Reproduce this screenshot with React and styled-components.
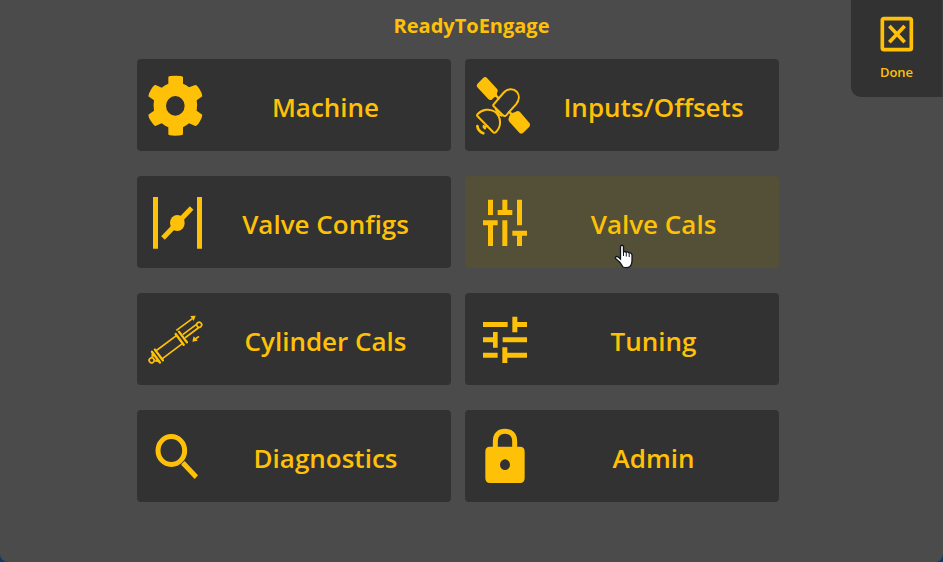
import React from 'react';
import styled, { createGlobalStyle } from 'styled-components';

const AMBER = '#ffc107';

const GlobalStyle = createGlobalStyle`
  * {
    box-sizing: border-box;
  }

  body {
    margin: 0;
    background: #0a3a66;
    font-family: "Open Sans", "Noto Sans", sans-serif;
  }
`

const Page = styled.div`
  display: grid;
  grid-template-columns: 137px 1fr 164px;
  grid-template-rows: 59px auto 1fr;
  min-height: 100vh;
  background: #4b4b4b;
  border-radius: 0 0 8px 8px;
`

const Title = styled.h1`
  grid-column: 1 / -1;
  grid-row: 1;
  margin: 0;
  padding-top: 13px;
  color: ${AMBER};
  font-size: 20px;
  font-weight: 700;
  line-height: 26px;
  text-align: center;
`

const Menu = styled.nav`
  grid-column: 2;
  grid-row: 2;
  display: grid;
  grid-template-columns: 1fr 1fr;
  gap: 25px 14px;
`

const Tile = styled.button`
  position: relative;
  display: flex;
  align-items: center;
  height: 92px;
  padding: 0 14px 0 0;
  border: 0;
  border-radius: 4px;
  background: ${props => (props.$active ? '#535037' : '#323232')};
  color: ${AMBER};
  font-family: inherit;
  font-size: 26px;
  font-weight: 600;
  cursor: pointer;
`

const TileIcon = styled.svg`
  flex: none;
  width: 77px;
  height: 92px;
  fill: ${AMBER};
`

const TileLabel = styled.span`
  flex: 1;
  padding-top: 4px;
  line-height: 36px;
  text-align: center;
  white-space: nowrap;
`

const DoneButton = styled.button`
  grid-column: 3;
  grid-row: 1 / span 2;
  justify-self: end;
  align-self: start;
  display: flex;
  flex-direction: column;
  align-items: center;
  gap: 10px;
  width: 92px;
  height: 97px;
  padding: 16px 0 0;
  border: 0;
  border-right: 1px solid #404040;
  border-radius: 0 0 0 10px;
  background: #323232;
  color: ${AMBER};
  font-family: inherit;
  font-size: 13px;
  font-weight: 600;
  line-height: 20px;
  cursor: pointer;
`

const Pointer = styled.svg`
  position: absolute;
  left: 149px;
  top: 68px;
  width: 20px;
  height: 26px;
`

const MachineIcon = () => (
    <TileIcon viewBox="-9 -18 231 276" aria-hidden="true">
        <path
            fillRule="evenodd"
            d="M85 36Q85 32 106 32T129 36V56Q139 60 147 67L166 60Q171 60 179 73T187 94L170 106Q173 122 170 137L187 149Q187 157 179 170T166 183L147 175Q139 182 129 187V208Q128 212 106 212T85 208V187Q75 183 65 175L46 183Q41 181 33 169T25 149L42 137Q39 122 42 106L25 94Q26 85 34 72T47 60L65 68Q74 60 85 56ZM106 93A28 29.500 0 1 0 106 152A28 29.500 0 1 0 106 93Z"
        />
    </TileIcon>
);

const SatelliteIcon = () => (
    <TileIcon viewBox="-9 -18 231 276" aria-hidden="true">
        <path d="M28 57L46 38Q52 34 57 39L88 73Q92 78 87 83V94L79 97L71 104Q65 107 60 101L28 67Q24 62 28 57Z" />
        <path d="M122 160L124 153L130 145L140 142L146 139Q151 136 156 141L185 175Q188 180 184 185L165 204Q159 208 154 203L124 170Q120 165 122 160Z" />
        <g fill="none" stroke={AMBER} strokeWidth="6" strokeLinecap="round" strokeLinejoin="round">
            <path d="M84 92L92 100M124 141L132 149" strokeWidth="7" />
            <path d="M77 118L106 84C118 70 136 69 147 81C155 91 154 106 144 118L119 146C114 154 109 155 104 150L77 124Q74 121 77 118Z" />
            <path d="M28 148C42 133 66 129 82 141C100 157 101 184 84 201Q79 206 75 201L28 153Q26 151 28 148Z" />
            <path d="M83 132L92 148L101 152M58 183L47 187" />
            <path d="M28 183Q30 199 46 205" strokeWidth="8" />
            <path d="M47 183L51 190" strokeWidth="7" />
        </g>
    </TileIcon>
);

const ValveIcon = () => (
    <TileIcon viewBox="-9 -27 231 276" aria-hidden="true">
        <path d="M39 36H54V191H39ZM171 36H186V191H171Z" />
        <path d="M69 159L155 69" stroke={AMBER} strokeWidth="15" />
        <ellipse cx="112" cy="114" rx="22" ry="24" />
    </TileIcon>
);

const SlidersIcon = () => (
    <TileIcon viewBox="15 18 231 276" aria-hidden="true">
        <path d="M84 89H99V135H84ZM127 89H142V120H157V135H113V120H127ZM171 89H186V166H171ZM69 151H113V166H99V228H84V166H69ZM127 151H142V228H127ZM157 182H201V197H186V228H171V197H157Z" />
    </TileIcon>
);

const CylinderIcon = () => (
    <TileIcon viewBox="-9 -21 231 276" aria-hidden="true">
        <g transform="translate(35 181) rotate(-36.8)" fill="none" stroke={AMBER} strokeWidth="5">
            <circle r="7.500" />
            <circle cx="178" r="7.500" />
            <path d="M171 -6H121M171 6H121" />
            <path d="M29 -15H105M29 15H105" />
            <path d="M8 -7L17 -16M8 7L17 16" strokeWidth="7" />
            <path d="M16 -20V20M27 -20V20M105 -20V20M117 -20V20" strokeWidth="7" strokeLinecap="round" />
        </g>
        <path d="M109 91L157 56M177 109L166 117" fill="none" stroke={AMBER} strokeWidth="5" />
        <path d="M151 48L167 47L161 63ZM157 125L161 109L173 122Z" />
    </TileIcon>
);

const TuningIcon = () => (
    <TileIcon viewBox="-15 -21 231 276" aria-hidden="true">
        <path d="M39 66H113V81H39ZM127 50H142V66H171V81H142V97H127ZM69 96H83V143H69V127H39V112H69ZM98 112H171V127H98ZM39 158H83V173H39ZM97 142H112V158H171V173H112V189H97Z" />
    </TileIcon>
);

const SearchIcon = () => (
    <TileIcon viewBox="-9 30 231 276" aria-hidden="true">
        <ellipse cx="94" cy="151.500" rx="40" ry="42" fill="none" stroke={AMBER} strokeWidth="15" />
        <path d="M124 192L134 183L174 226L164 237L125 196Z" />
    </TileIcon>
);

const LockIcon = () => (
    <TileIcon viewBox="-15 330 231 276" aria-hidden="true">
        <path d="M76 445V424C76 404 87 394 105 394S134 404 134 424V445" fill="none" stroke={AMBER} strokeWidth="15" />
        <path
            fillRule="evenodd"
            d="M60 440H150Q164 440 164 455V534Q164 549 150 549H60Q46 549 46 534V455Q46 440 60 440ZM105 478A15 16 0 1 0 105 510A15 16 0 1 0 105 478Z"
        />
    </TileIcon>
);

const CloseIcon = () => (
    <svg width="34" height="36" viewBox="121 48 102 108" fill="none" stroke={AMBER} aria-hidden="true">
        <rect x="128" y="56" width="87" height="93" rx="5" strokeWidth="11" />
        <path d="M149 78L195 127M195 78L149 127" strokeWidth="11" />
    </svg>
);

const HandPointer = () => (
    <Pointer viewBox="0 0 20 26" aria-hidden="true">
        <path
            d="M6.500 2.500C7 .8 9 .8 9.500 2.500V8Q11 6.800 12.200 8.300Q13.800 7.300 15 9Q17.500 8.300 18 11V17Q18 20 16 22.500Q13 24.500 9 23L6 18.500L1.500 14.500C1 12.500 3 12 4.200 13L6.500 15Z"
            fill="#fff"
            stroke="#111320"
            strokeWidth="1.300"
        />
        <path d="M9.500 7V12M12.300 8.500V12.500M15.200 9.500V13" fill="none" stroke="#111320" />
    </Pointer>
);

const items = [
    { label: 'Machine', Icon: MachineIcon },
    { label: 'Inputs/Offsets', Icon: SatelliteIcon },
    { label: 'Valve Configs', Icon: ValveIcon },
    { label: 'Valve Cals', Icon: SlidersIcon, active: true },
    { label: 'Cylinder Cals', Icon: CylinderIcon },
    { label: 'Tuning', Icon: TuningIcon },
    { label: 'Diagnostics', Icon: SearchIcon },
    { label: 'Admin', Icon: LockIcon },
];

function App() {
    return (
        <>
            <GlobalStyle />
            <Page>
                <Title>ReadyToEngage</Title>
                <Menu>
                    {items.map(({ label, Icon, active }) => (
                        <Tile key={label} type="button" $active={active}>
                            <Icon />
                            <TileLabel>{label}</TileLabel>
                            {active && <HandPointer />}
                        </Tile>
                    ))}
                </Menu>
                <DoneButton type="button">
                    <CloseIcon />
                    Done
                </DoneButton>
            </Page>
        </>
    );
}

export default App;
